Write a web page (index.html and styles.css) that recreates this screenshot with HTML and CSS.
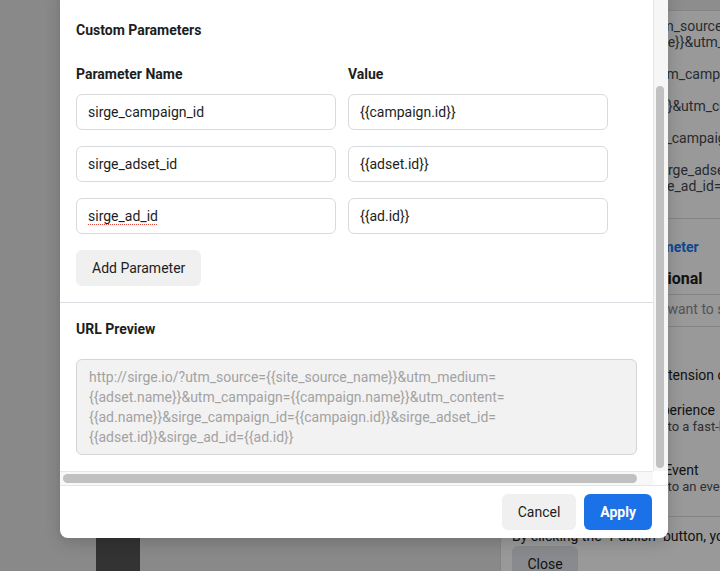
FILE: index.html
```html
<!DOCTYPE html>
<html lang="en">
<head>
<meta charset="utf-8">
<title>Custom Parameters</title>
<link rel="stylesheet" href="styles.css">
</head>
<body>
<div class="page">
  <div class="workspace">
    <div class="dock"></div>
  </div>
  <aside class="panel">
    <div class="panel-top"></div>
    <div class="url-list">
      <p>http://sirge.io/?utm_source=<br>{{site_source_name}}&amp;utm_medium=</p>
      <p>{{adset.name}}&amp;utm_campaign=</p>
      <p>{{campaign.name}}&amp;utm_content=</p>
      <p>{{ad.name}}&amp;sirge_campaign_id=</p>
      <p>{{campaign.id}}&amp;sirge_adset_id=<br>{{ad_set.ids}}&amp;sirge_ad_id=</p>
    </div>
    <div class="panel-link">Build a URL Parameter</div>
    <div class="panel-heading">Display Link Optional</div>
    <div class="panel-help">Enter the URL that you want to show on your ad</div>
    <div class="options">
      <div class="option-title first">Website extension options</div>
      <div class="option-title">Instant Experience</div>
      <div class="option-sub">Send people to a fast-loading experience</div>
      <div class="option-title">Facebook Event</div>
      <div class="option-sub">Send people to an event page</div>
    </div>
    <div class="panel-terms">By clicking the "Publish" button, you agree to the terms</div>
    <button class="panel-close">Close</button>
  </aside>
</div>

<div class="backdrop"></div>

<div class="modal" role="dialog" aria-label="Custom Parameters">
  <div class="modal-body">
    <div class="scroll-view">
      <section class="section section-params">
        <h3 class="section-title">Custom Parameters</h3>
        <div class="param-grid param-head">
          <div class="col-label">Parameter Name</div>
          <div class="col-label">Value</div>
        </div>
        <div class="param-grid param-rows">
          <div class="field" role="textbox">sirge_campaign_id</div>
          <div class="field" role="textbox">{{campaign.id}}</div>
          <div class="field" role="textbox">sirge_adset_id</div>
          <div class="field" role="textbox">{{adset.id}}</div>
          <div class="field" role="textbox"><span class="misspelled">sirge_ad_id</span></div>
          <div class="field" role="textbox">{{ad.id}}</div>
        </div>
        <button class="btn btn-secondary add-btn" type="button">Add Parameter</button>
      </section>
      <section class="section section-preview">
        <h3 class="section-title preview-title">URL Preview</h3>
        <div class="preview">http://sirge.io/?utm_source=<wbr>{{site_source_name}}&amp;utm_medium=<wbr>{{adset.name}}&amp;utm_campaign=<wbr>{{campaign.name}}&amp;utm_content=<wbr>{{ad.name}}&amp;sirge_campaign_id=<wbr>{{campaign.id}}&amp;sirge_adset_id=<wbr>{{adset.id}}&amp;sirge_ad_id=<wbr>{{ad.id}}</div>
      </section>
    </div>
    <div class="vscroll"><div class="vthumb"></div></div>
    <div class="hscroll"><div class="hthumb"></div></div>
    <div class="scroll-corner"></div>
  </div>
  <div class="modal-footer">
    <button class="btn btn-secondary" type="button">Cancel</button>
    <button class="btn btn-primary" type="button">Apply</button>
  </div>
</div>
</body>
</html>
```
FILE: styles.css
```css
* { box-sizing: border-box; }

html, body {
  margin: 0;
  padding: 0;
}

body {
  width: 720px;
  height: 571px;
  overflow: hidden;
  position: relative;
  font-family: Roboto, "Liberation Sans", Arial, sans-serif;
  color: #1c1e21;
}

/* ---------- background page ---------- */
.page {
  display: flex;
  height: 571px;
}

.workspace {
  width: 500px;
  background: #e4e4e4;
  display: flex;
  flex-direction: column;
  justify-content: flex-end;
}

.dock {
  width: 44px;
  height: 80px;
  margin-left: 96px;
  background: #555555;
}

.panel {
  flex: 1;
  background: #ffffff;
  border-left: 1px solid #dadde1;
  padding-left: 11px;
  font-size: 14px;
  white-space: nowrap;
  overflow: hidden;
}

.panel-top {
  height: 11px;
  margin-left: -11px;
  background: #ececec;
  border-bottom: 1px solid #dadde1;
}

.url-list {
  margin-left: -11px;
  padding: 7px 0 8px 52px;
  line-height: 16px;
  color: #444950;
  border-bottom: 1px solid #dadde1;
}

.url-list p {
  margin: 0 0 16px;
}

.panel-link {
  margin-top: 19px;
  line-height: 18px;
  font-weight: 700;
  color: #1877f2;
  padding-left: 45px;
}

.panel-heading {
  margin-top: 13px;
  line-height: 20px;
  font-size: 16px;
  font-weight: 700;
  padding-bottom: 5px;
  border-bottom: 1px solid #dadde1;
  margin-left: -11px;
  padding-left: 50px;
}

.panel-help {
  margin-left: -11px;
  padding: 6px 0 9px 25px;
  line-height: 16px;
  color: #8a8d91;
  border-bottom: 1px solid #dadde1;
}

.options {
  padding-left: 92px;
  margin-left: -11px;
  padding-bottom: 21px;
  border-bottom: 1px solid #dadde1;
}

.option-title {
  font-size: 14px;
  line-height: 18px;
  margin-top: 26px;
  padding-left: 7px;
  color: #1c1e21;
}

.option-title.first {
  margin-top: 39px;
  margin-bottom: -9px;
}

.option-sub {
  font-size: 13px;
  line-height: 16px;
  color: #4b4f56;
}

.panel-terms {
  margin-top: 10px;
  line-height: 18px;
  color: #1c1e21;
}

.panel-close {
  margin-top: 1px;
  height: 36px;
  width: 66px;
  border: none;
  border-radius: 6px;
  background: #e4e6eb;
  font: inherit;
  font-size: 14px;
  color: #1c1e21;
}

/* ---------- overlay ---------- */
.backdrop {
  position: absolute;
  inset: 0;
  background: rgba(0, 0, 0, 0.4);
}

.modal {
  position: absolute;
  left: 60px;
  top: -12px;
  width: 608px;
  height: 550px;
  display: flex;
  flex-direction: column;
  background: #ffffff;
  border-radius: 8px;
  box-shadow: 0 4px 16px rgba(0, 0, 0, 0.18);
  overflow: hidden;
}

.modal-body {
  flex: 1;
  min-height: 0;
  display: grid;
  grid-template-columns: 1fr 15px;
  grid-template-rows: 1fr 14px;
}

.scroll-view {
  min-height: 0;
  overflow: hidden;
}

.section {
  padding: 16px;
}

.section-params {
  padding-top: 32px;
  border-bottom: 1px solid #dadde1;
}

.section-title {
  margin: 0 0 24px;
  font-size: 14px;
  line-height: 20px;
  font-weight: 700;
  color: #1c1e21;
}

.preview-title {
  margin-bottom: 20px;
}

.param-grid {
  display: grid;
  grid-template-columns: 260px 260px;
  column-gap: 12px;
}

.param-head {
  margin-bottom: 10px;
}

.col-label {
  font-size: 14px;
  line-height: 20px;
  font-weight: 700;
}

.param-rows {
  row-gap: 16px;
}

.field {
  height: 36px;
  display: flex;
  align-items: center;
  border: 1px solid #d8dadd;
  border-radius: 6px;
  padding: 0 11px;
  font-size: 14px;
  color: #1c1e21;
  background: #ffffff;
  white-space: nowrap;
  overflow: hidden;
}

.misspelled {
  text-decoration: underline dotted #e0463c;
  text-decoration-thickness: 1px;
  text-underline-offset: 3px;
}

.btn {
  height: 36px;
  padding: 0 16px;
  border: none;
  border-radius: 6px;
  font-family: Roboto, "Liberation Sans", Arial, sans-serif;
  font-size: 14px;
  cursor: pointer;
}

.btn-secondary {
  background: #f0f0f0;
  color: #1c1e21;
}

.btn-primary {
  background: #1b72e8;
  color: #ffffff;
  font-weight: 700;
}

.add-btn {
  margin-top: 16px;
  display: block;
}

.preview {
  background: #f2f2f2;
  border: 1px solid #d5d5d5;
  border-radius: 6px;
  padding: 7px 12px;
  font-size: 14px;
  line-height: 20px;
  color: #a2a2a2;
  min-height: 96px;
}

/* drawn scrollbars */
.vscroll {
  background: #f6f6f6;
  border-left: 1px solid #e6e6e6;
  padding: 98px 0 0 2px;
}

.vthumb {
  width: 8px;
  height: 382px;
  border-radius: 4px;
  background: #c1c1c1;
}

.hscroll {
  background: #f8f8f8;
  border-top: 1px solid #e6e6e6;
  padding: 2px 0 0 3px;
}

.hthumb {
  width: 574px;
  height: 9px;
  border-radius: 5px;
  background: #c1c1c1;
}

.scroll-corner {
  background: #ffffff;
}

.modal-footer {
  display: flex;
  justify-content: flex-end;
  gap: 8px;
  padding: 8px 16px;
  border-top: 1px solid #e6e6e6;
}
```
